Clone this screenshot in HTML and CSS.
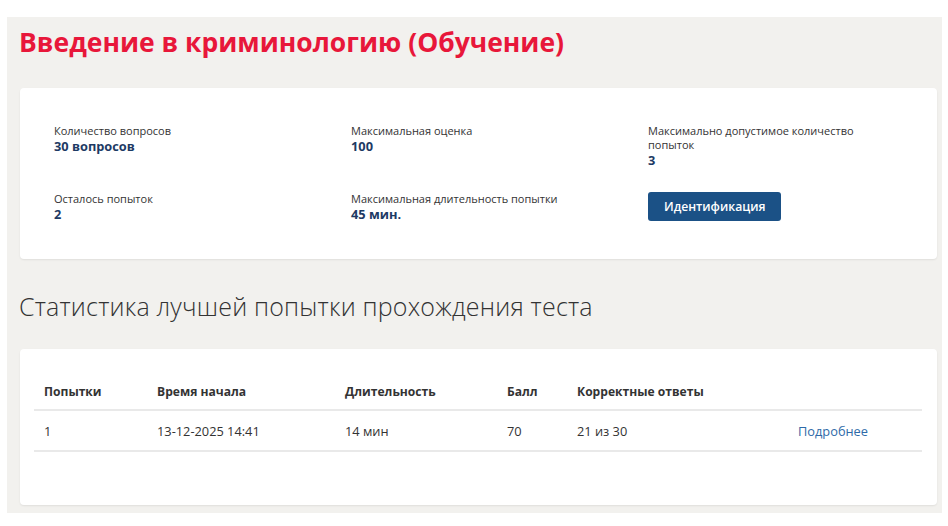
FILE: index.html
```html
<!DOCTYPE html>
<html lang="ru">
<head>
<meta charset="utf-8">
<title>Введение в криминологию (Обучение)</title>
<link rel="stylesheet" href="styles.css">
</head>
<body>
<main class="page">
  <h1 class="title">Введение в криминологию (Обучение)</h1>

  <section class="card info">
    <div class="info-grid">
      <div class="field">
        <div class="label">Количество вопросов</div>
        <div class="value">30 вопросов</div>
      </div>
      <div class="field">
        <div class="label">Максимальная оценка</div>
        <div class="value">100</div>
      </div>
      <div class="field">
        <div class="label">Максимально допустимое количество попыток</div>
        <div class="value">3</div>
      </div>
      <div class="field">
        <div class="label">Осталось попыток</div>
        <div class="value">2</div>
      </div>
      <div class="field">
        <div class="label">Максимальная длительность попытки</div>
        <div class="value">45 мин.</div>
      </div>
      <div class="field">
        <button class="btn" type="button">Идентификация</button>
      </div>
    </div>
  </section>

  <h2 class="subtitle">Статистика лучшей попытки прохождения теста</h2>

  <section class="card stats">
    <table class="table">
      <colgroup>
        <col class="c1"><col class="c2"><col class="c3"><col class="c4"><col class="c5"><col class="c6">
      </colgroup>
      <thead>
        <tr>
          <th>Попытки</th>
          <th>Время начала</th>
          <th>Длительность</th>
          <th>Балл</th>
          <th>Корректные ответы</th>
          <th></th>
        </tr>
      </thead>
      <tbody>
        <tr>
          <td>1</td>
          <td>13-12-2025 14:41</td>
          <td>14 мин</td>
          <td>70</td>
          <td>21 из 30</td>
          <td><a class="link" href="#">Подробнее</a></td>
        </tr>
      </tbody>
    </table>
  </section>
</main>
</body>
</html>
```

FILE: styles.css
```css
html, body {
  margin: 0;
  padding: 0;
  background: #ffffff;
}

body {
  font-family: "Open Sans", "Noto Sans", "Liberation Sans", sans-serif;
  color: #333333;
}

.page {
  margin: 17px 6px 13px 7px;
  padding: 7px 5px 8px 13px;
  background: #f2f1ee;
}

.title {
  margin: 0 0 28px -1px;
  font-size: 26.5px;
  line-height: 36px;
  font-weight: 700;
  color: #e8173a;
}

.card {
  background: #ffffff;
  border-radius: 4px;
  box-shadow: 0 1px 2px rgba(0, 0, 0, 0.08);
}

.info {
  padding: 36px 20px 37px 34px;
}

.info-grid {
  display: grid;
  grid-template-columns: 297px 297px 230px;
  row-gap: 24px;
}

.label {
  font-size: 11px;
  line-height: 14px;
  color: #333333;
}

.value {
  font-size: 12.8px;
  line-height: 16px;
  font-weight: 700;
  color: #1d3a64;
}

.btn {
  display: inline-block;
  height: 29px;
  padding: 0 16px;
  border: 0;
  border-radius: 3px;
  background: #1b5186;
  color: #ffffff;
  font-family: inherit;
  font-size: 12.2px;
  font-weight: 600;
  cursor: pointer;
}

.subtitle {
  margin: 31px 0 27px -1px;
  font-size: 25px;
  line-height: 32px;
  font-weight: 300;
  letter-spacing: 0.2px;
  color: #333333;
}

.stats {
  padding: 21px 15px 53px 14px;
}

.table {
  width: 100%;
  border-collapse: collapse;
  table-layout: fixed;
  font-size: 12.8px;
}

.c1 { width: 113px; }
.c2 { width: 188px; }
.c3 { width: 162px; }
.c4 { width: 70px; }
.c5 { width: 221px; }

.table th,
.table td {
  line-height: 17px;
  text-align: left;
  white-space: nowrap;
  border-bottom: 2px solid #e9e9e9;
}

.table th {
  padding: 13px 10px 9px;
  font-size: 12.1px;
  font-weight: 700;
  color: #333333;
}

.table td {
  padding: 12px 10px 10px;
  color: #333333;
}

.link {
  color: #2e6aa8;
  text-decoration: none;
}
```
